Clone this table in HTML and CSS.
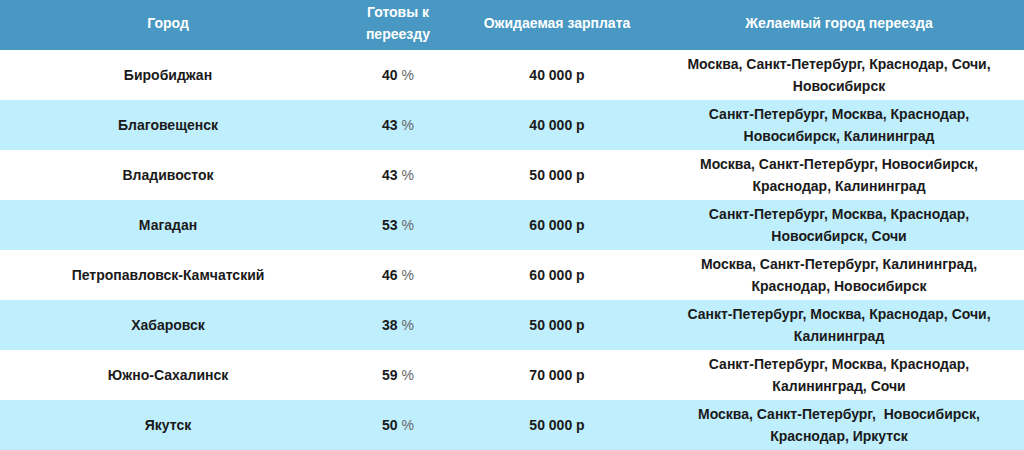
FILE: index.html
```html
<!DOCTYPE html>
<html lang="ru">
<head>
<meta charset="utf-8">
<title>Таблица</title>
<link rel="stylesheet" href="styles.css">
</head>
<body>
<table class="grid">
  <colgroup>
    <col class="c1"><col class="c2"><col class="c3"><col class="c4">
  </colgroup>
  <thead>
    <tr><th>Город</th><th>Готовы к<br>переезду</th><th>Ожидаемая зарплата</th><th>Желаемый город переезда</th></tr>
  </thead>
  <tbody>
    <tr><td>Биробиджан</td><td>40 <span class="pc">%</span></td><td>40 000 р</td><td>Москва, Санкт-Петербург, Краснодар, Сочи,<br>Новосибирск</td></tr>
    <tr class="alt"><td>Благовещенск</td><td>43 <span class="pc">%</span></td><td>40 000 р</td><td>Санкт-Петербург, Москва, Краснодар,<br>Новосибирск, Калининград</td></tr>
    <tr><td>Владивосток</td><td>43 <span class="pc">%</span></td><td>50 000 р</td><td>Москва, Санкт-Петербург, Новосибирск,<br>Краснодар, Калининград</td></tr>
    <tr class="alt"><td>Магадан</td><td>53 <span class="pc">%</span></td><td>60 000 р</td><td>Санкт-Петербург, Москва, Краснодар,<br>Новосибирск, Сочи</td></tr>
    <tr><td>Петропавловск-Камчатский</td><td>46 <span class="pc">%</span></td><td>60 000 р</td><td>Москва, Санкт-Петербург, Калининград,<br>Краснодар, Новосибирск</td></tr>
    <tr class="alt"><td>Хабаровск</td><td>38 <span class="pc">%</span></td><td>50 000 р</td><td>Санкт-Петербург, Москва, Краснодар, Сочи,<br>Калининград</td></tr>
    <tr><td>Южно-Сахалинск</td><td>59 <span class="pc">%</span></td><td>70 000 р</td><td>Санкт-Петербург, Москва, Краснодар,<br>Калининград, Сочи</td></tr>
    <tr class="alt"><td>Якутск</td><td>50 <span class="pc">%</span></td><td>50 000 р</td><td>Москва, Санкт-Петербург,&nbsp; Новосибирск,<br>Краснодар, Иркутск</td></tr>
  </tbody>
</table>
</body>
</html>
```
FILE: styles.css
```css
html, body {
  margin: 0;
  padding: 0;
  background: #ffffff;
}
body {
  font-family: "Liberation Sans", Arial, sans-serif;
  font-size: 14px;
  color: #1a1a1a;
}
.grid {
  width: 1024px;
  border-collapse: collapse;
  table-layout: fixed;
}
.c1 { width: 336px; }
.c2 { width: 124px; }
.c3 { width: 194px; }
.c4 { width: 370px; }
.grid th {
  background: #4898c3;
  color: #ffffff;
  font-weight: bold;
  height: 50px;
  padding: 0 0 5px 0;
  box-sizing: border-box;
  line-height: 22px;
  text-align: center;
  vertical-align: middle;
}
.grid td {
  height: 50px;
  padding: 0;
  line-height: 22px;
  text-align: center;
  vertical-align: middle;
  font-weight: bold;
}
.grid tr.alt td {
  background: #bfeefd;
}
.pc {
  color: #666666;
  font-weight: normal;
}
```
